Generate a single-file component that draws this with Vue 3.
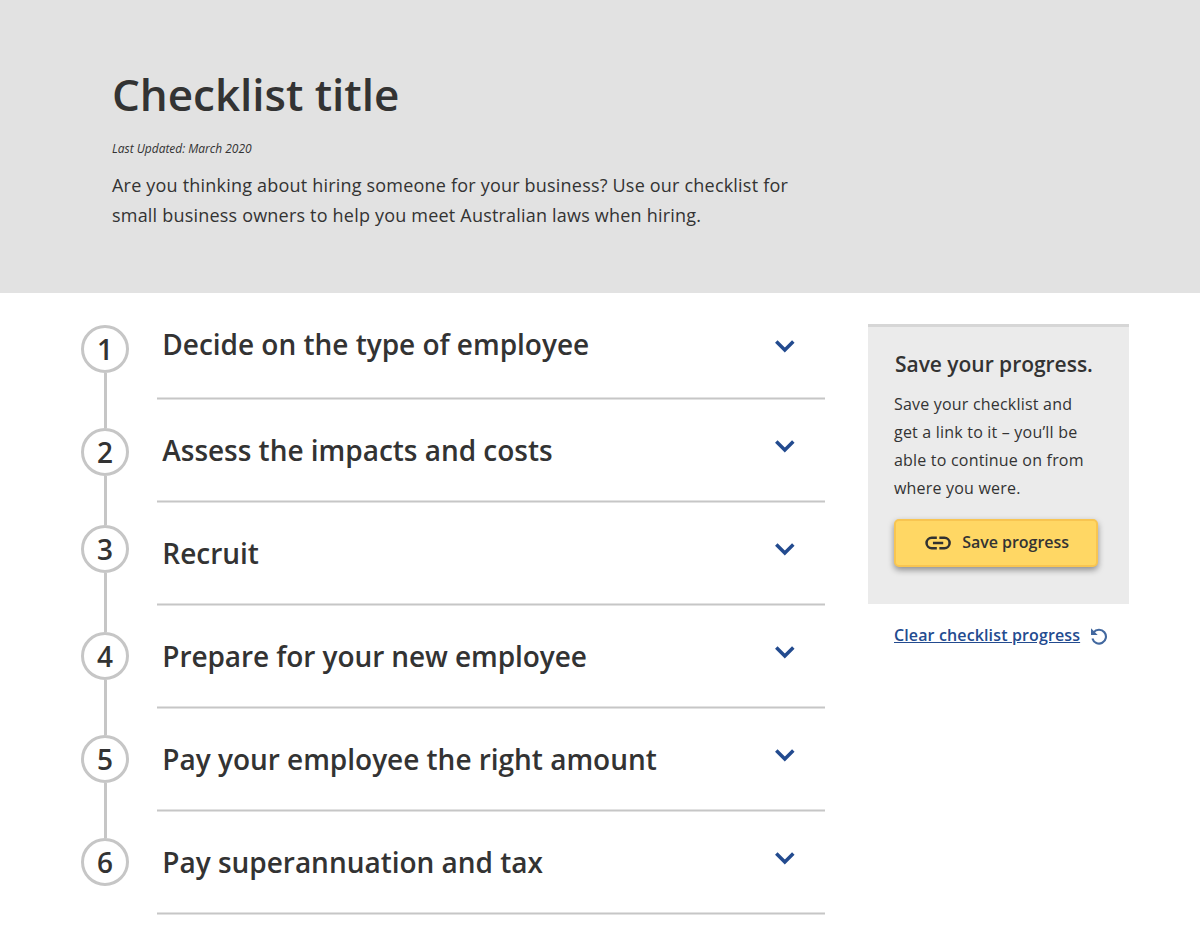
<script setup>
const steps = [
  'Decide on the type of employee',
  'Assess the impacts and costs',
  'Recruit',
  'Prepare for your new employee',
  'Pay your employee the right amount',
  'Pay superannuation and tax'
]
</script>

<template>
  <div class="page">
    <header class="hero">
      <h1>Checklist title</h1>
      <p class="updated">Last Updated: March 2020</p>
      <p class="intro">Are you thinking about hiring someone for your business? Use our checklist for<br>small business owners to help you meet Australian laws when hiring.</p>
    </header>
    <main class="body">
      <ol class="steps">
        <li v-for="(title, i) in steps" :key="title" :class="['step', 'step-' + (i + 1)]">
          <div class="rail">
            <span class="line before"></span>
            <span class="num">{{ i + 1 }}</span>
            <span class="line after"></span>
          </div>
          <div class="row">
            <h2>{{ title }}</h2>
            <svg class="chev" width="20" height="13" viewBox="0 0 20 13"><path d="M1.3 1.6 L9.8 10.1 L18.3 1.6" fill="none" stroke="#234b8f" stroke-width="3.5" /></svg>
          </div>
        </li>
      </ol>
      <aside class="side">
        <section class="card">
          <h3>Save your progress.</h3>
          <p>Save your checklist and<br>get a link to it – you’ll be<br>able to continue on from<br>where you were.</p>
          <button class="save">
            <svg width="27" height="14" viewBox="0 0 27 14" fill="none" stroke="#313131" stroke-width="2.6"><path d="M12.2 1.6H7a5.4 5.4 0 0 0 0 10.8h5.2M14.8 1.6H20a5.4 5.4 0 0 1 0 10.8h-5.2M8.2 7h10.6" /></svg>
            <span>Save progress</span>
          </button>
        </section>
        <a class="clear"><span>Clear checklist progress</span>
          <svg width="18" height="18" viewBox="0 0 18 18"><path d="M3.6 5.4A6.9 6.9 0 1 1 2.4 11.5" fill="none" stroke="#42689f" stroke-width="2.1" /><path d="M1 1.2V7.9H7.7Z" fill="#42689f" /></svg>
        </a>
      </aside>
    </main>
  </div>
</template>

<style>
html, body { margin: 0; background: #fff; }
</style>
<style scoped>
.page { width: 1200px; height: 947px; overflow: hidden; font-family: "Open Sans", sans-serif; color: #333; }
h1, h2, h3, p, ol { margin: 0; padding: 0; }
.hero { height: 293px; box-sizing: border-box; background: #e2e2e2; padding: 64px 112px 0; }
h1 { font-size: 44px; line-height: 60px; font-weight: 600; letter-spacing: -0.03px; }
.updated { font-size: 12px; line-height: 16px; font-style: italic; margin-top: 17px; letter-spacing: -0.02px; }
.intro { font-size: 18px; line-height: 30px; margin-top: 13px; letter-spacing: 0.2px; white-space: nowrap; }
.body { display: flex; }
.steps { list-style: none; width: 743.5px; margin-left: 81px; }
.step { display: flex; height: 103px; --top: 26px; }
.step-1 { height: 107px; --top: 32px; }
.step-2 { --top: 28px; }
.step-3 { --top: 22px; }
.rail { display: flex; flex-direction: column; width: 48px; margin-right: 28px; flex: none; }
.line { width: 2.6px; margin-left: 23.2px; background: #c6c6c6; }
.before { height: var(--top); flex: none; }
.after { flex: 1; }
.step-1 .before, .step-6 .after { visibility: hidden; }
.num { display: flex; flex: none; align-items: center; justify-content: center; box-sizing: border-box; width: 48px; height: 48px; padding-bottom: 1px; border: 3px solid #c6c6c6; border-radius: 50%; font-size: 28px; font-weight: 600; background: #fff; }
.row { display: flex; justify-content: space-between; flex: 1; box-sizing: border-box; padding: 30px 29.5px 0 5.3px; background: linear-gradient(#e2e2e2 0 1px, #c6c6c6 1px 2px, #e2e2e2 2px) 0 100% / 100% 3px no-repeat; }
.step-1 .row { padding-top: 31px; }
h2 { font-size: 28px; line-height: 40px; font-weight: 600; letter-spacing: -0.02px; white-space: nowrap; }
.step-4 h2 { letter-spacing: -0.08px; }
.chev { margin-top: 10px; }
.step-1 .chev { margin-top: 16px; }
.side { width: 261px; margin: 31px 0 0 43.5px; }
.card { box-sizing: border-box; height: 280px; background: #ebebeb; border-top: 3px solid #d6d6d6; padding: 22px 26px 0; }
h3 { font-size: 21px; line-height: 30px; font-weight: 600; letter-spacing: -0.03px; white-space: nowrap; padding-left: 1px; }
.card p { font-size: 16px; line-height: 28px; margin-top: 11px; letter-spacing: 0.2px; white-space: nowrap; }
.save { display: flex; align-items: center; gap: 11px; box-sizing: border-box; width: 204px; height: 48px; margin-top: 17px; padding: 0 27px 1px 28.5px; border: 2px solid #f8c551; border-radius: 5px; background: #ffd764; box-shadow: 0 3px 6px #0006; font: 600 16px "Open Sans", sans-serif; color: #333; white-space: nowrap; }
.save svg { margin-left: 0.5px; }
.save span { margin-top: -1px; letter-spacing: -0.03px; }
.clear { display: flex; align-items: center; gap: 10px; margin: 20px 0 0 26px; color: #234b8f; font-size: 16px; line-height: 22px; font-weight: 600; letter-spacing: 0.13px; white-space: nowrap; }
.clear span { text-decoration: underline; }
.clear svg { margin-top: 2px; }
</style>
